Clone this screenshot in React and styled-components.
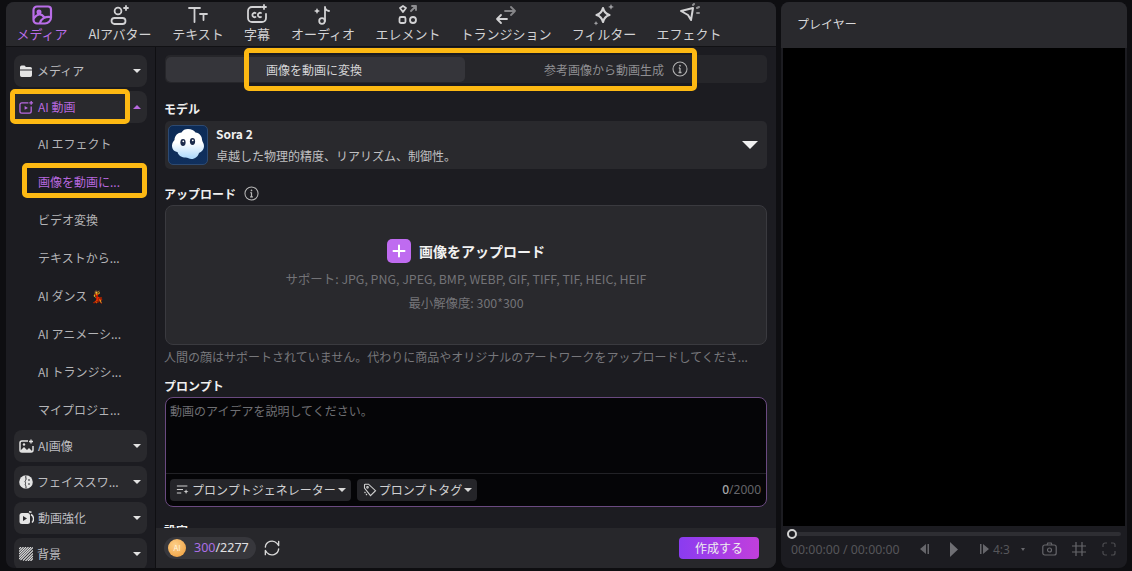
import React from "react";
import styled, { createGlobalStyle } from "styled-components";

const GlobalStyle = createGlobalStyle`
  html, body {
    margin: 0;
    padding: 0;
    background: #0e0e11;
    overflow: hidden;
  }
  * {
    box-sizing: border-box;
  }
`;

const FONT = `"Noto Sans CJK JP", "Noto Sans", sans-serif`;

const Stroke = ({ size = 20, children, color = "currentColor", sw = 1.8 }) => (
  <svg width={size} height={size} viewBox="0 0 24 24" fill="none" stroke={color} strokeWidth={sw} strokeLinecap="round" strokeLinejoin="round">
    {children}
  </svg>
);

const tabs = [
  {
    label: "メディア",
    w: 72,
    active: true,
    icon: (
      <Stroke size={24} sw={2.2}>
        <path d="M7 3.5h11a3 3 0 0 1 3 3v8c0 3.5-3 6-6 6H7a3.5 3.5 0 0 1-3.5-3.5V7A3.5 3.5 0 0 1 7 3.5z" />
        <path d="M4 15c3-4 7-5 10-1M10 20c1-4 5-7 11-6" />
        <circle cx="9" cy="9" r="1.4" />
      </Stroke>
    ),
  },
  {
    label: "AIアバター",
    w: 84,
    icon: (
      <Stroke size={24}>
        <circle cx="10" cy="8" r="3.4" />
        <rect x="3.5" y="15" width="14" height="6" rx="3" />
        <path d="M18 3v4M16 5h4" />
      </Stroke>
    ),
  },
  {
    label: "テキスト",
    w: 72,
    icon: (
      <Stroke size={24}>
        <path d="M3 5h11M8.5 5v14M14 11h7M17.5 11v6" />
      </Stroke>
    ),
  },
  {
    label: "字幕",
    w: 46,
    icon: (
      <Stroke size={24}>
        <path d="M16 4H7a4 4 0 0 0-4 4v7a4 4 0 0 0 4 4h10a4 4 0 0 0 4-4v-4" />
        <path d="M10.5 10a2.2 2.2 0 1 0 0 4M16 10a2.2 2.2 0 1 0 0 4M19 2v4M17 4h4" />
      </Stroke>
    ),
  },
  {
    label: "オーディオ",
    w: 86,
    icon: (
      <Stroke size={24}>
        <circle cx="11" cy="18" r="2.8" />
        <path d="M14 18V4c0 2 1.500 3.500 4 4" />
        <path d="M6 5l1 2 2 1-2 1-1 2-1-2-2-1 2-1z" fill="currentColor" stroke="none" />
      </Stroke>
    ),
  },
  {
    label: "エレメント",
    w: 84,
    icon: (
      <Stroke size={24}>
        <path d="M4 5l3-2 3 2-3 4z" />
        <path d="M15 8l5-5M16 3h4v4" opacity="0.6" />
        <rect x="3.500" y="14" width="6" height="6" rx="1.500" />
        <circle cx="17" cy="17" r="3" />
      </Stroke>
    ),
  },
  {
    label: "トランジション",
    w: 112,
    icon: (
      <Stroke size={24}>
        <path d="M3 16h10M7 12l-4 4 4 4" />
        <path d="M21 8H11M17 4l4 4-4 4" opacity="0.55" />
      </Stroke>
    ),
  },
  {
    label: "フィルター",
    w: 84,
    icon: (
      <Stroke size={24} sw={2.2}>
        <path d="M11 5c1 4 3 6 6.500 7-3.500 1-5.500 3-6.500 7-1-4-3-6-6.500-7 3.500-1 5.500-3 6.500-7z" />
        <path d="M19 1l.9 2 2 .9-2 .9-.9 2-.9-2-2-.9 2-.9zM4 18l.7 1.500 1.500.7-1.500.7L4 22.500l-.7-1.600-1.500-.7 1.500-.7z" fill="currentColor" stroke="none" opacity="0.7" />
      </Stroke>
    ),
  },
  {
    label: "エフェクト",
    w: 86,
    icon: (
      <Stroke size={24} sw={2}>
        <path d="M4 8l12-3-2 12-3-5z" />
        <path d="M16 2l1-1M20 5l2-1M20 10h2" opacity="0.6" />
      </Stroke>
    ),
  },
];

const Folder = () => (
  <svg width="14" height="14" viewBox="0 0 14 14">
    <path d="M1 3.200A1.700 1.700 0 0 1 2.700 1.500h2.800l1.500 1.500h4.300A1.700 1.700 0 0 1 13 4.700v6.600A1.700 1.700 0 0 1 11.300 13H2.700A1.700 1.700 0 0 1 1 11.300z" fill="#e4e4e4" />
    <rect x="1" y="5.500" width="12" height="1" fill="#2a2a2e" />
  </svg>
);

const VideoPlus = () => (
  <svg width="15" height="15" viewBox="0 0 16 16" fill="none" stroke="#b768df" strokeWidth="1.400">
    <path d="M10 3H3a2 2 0 0 0-2 2v7a2 2 0 0 0 2 2h8a2 2 0 0 0 2-2V7" />
    <path d="M6 6.500v4l3.500-2z" fill="#b768df" stroke="none" />
    <path d="M13 1v4M11 3h4" />
  </svg>
);

const ImageIcon = () => (
  <svg width="15" height="15" viewBox="0 0 15 15" fill="none">
    <path d="M9 2H3a2 2 0 0 0-2 2v7a2 2 0 0 0 2 2h9a2 2 0 0 0 2-2V7" stroke="#e0e0e0" strokeWidth="1.500" />
    <path d="M1 12l4-4 3 3 2-2 4 4H2z" fill="#e0e0e0" />
    <circle cx="5" cy="5.500" r="1.200" fill="#e0e0e0" />
    <path d="M12 .500v4M10 2.500h4" stroke="#e0e0e0" strokeWidth="1.300" />
  </svg>
);

const FaceIcon = () => (
  <svg width="14" height="14" viewBox="0 0 14 14">
    <circle cx="7" cy="7" r="6.800" fill="#e4e4e4" />
    <path d="M7 .500c-1 2 1 3-.5 5s1 2 0 3 1 2 .5 5" stroke="#2a2a2e" strokeWidth="1" fill="none" />
    <path d="M9 5h2M9 9h2" stroke="#2a2a2e" strokeWidth="1.200" />
  </svg>
);

const EnhanceIcon = () => (
  <svg width="15" height="14" viewBox="0 0 15 14">
    <rect x=".5" y="2" width="10.500" height="11" rx="2.500" fill="#e4e4e4" />
    <path d="M4 5v5l4-2.500z" fill="#2a2a2e" />
    <path d="M12 3.500a5 5 0 0 1 1 8M10 .800l2.500.5" stroke="#e4e4e4" strokeWidth="1.500" fill="none" />
  </svg>
);

const StripeIcon = () => (
  <svg width="14" height="14" viewBox="0 0 14 14" stroke="#dcdcdc" strokeWidth="1.100">
    <path d="M0 2l2-2M0 4.500L4.500 0M0 7l7-7M0 9.500L9.500 0M0 12L12 0M1.500 13L14 .5M4 13.500l10-10M6.500 14L14 6.500M9 14l5-5M11.500 14l2.500-2.500" />
  </svg>
);

const groupsBottom = [
  { label: "AI画像", icon: <ImageIcon /> },
  { label: "フェイススワ...", icon: <FaceIcon /> },
  { label: "動画強化", icon: <EnhanceIcon /> },
  { label: "背景", icon: <StripeIcon /> },
];

const subItems = [
  { label: "AI エフェクト" },
  { label: "画像を動画に...", active: true },
  { label: "ビデオ変換" },
  { label: "テキストから..." },
  { label: "AI ダンス 💃" },
  { label: "AI アニメーシ..." },
  { label: "AI トランジシ..." },
  { label: "マイプロジェ..." },
];

const InfoIcon = ({ size = 16, color = "#b0b0b0" }) => (
  <svg width={size} height={size} viewBox="0 0 16 16" fill="none" stroke={color} strokeWidth="1.100">
    <circle cx="8" cy="8" r="7" />
    <path d="M8 7v4.500M6.500 11.500h3M6.800 7H8" strokeWidth="1.300" />
    <circle cx="8" cy="4.700" r=".9" fill={color} stroke="none" />
  </svg>
);

const App = () => {
  return (
    <>
      <GlobalStyle />
      <Page>
        <Editor>
          <TopBar>
            {tabs.map(t => (
              <TopTab key={t.label} $w={t.w} $active={t.active}>
                <TabIcon>{t.icon}</TabIcon>
                <span>{t.label}</span>
              </TopTab>
            ))}
          </TopBar>
          <Body>
            <Sidebar>
              <Group>
                <Folder />
                <GroupLabel>メディア</GroupLabel>
                <Caret />
              </Group>
              <Group $open>
                <VideoPlus />
                <GroupLabel $active>AI 動画</GroupLabel>
                <Caret $up />
                <HighlightFrame $l={-4} $t={-2} $w={120} $h={35} />
              </Group>
              <SubList>
                {subItems.map(s => (
                  <SubItem key={s.label} $active={s.active}>
                    {s.label}
                    {s.active && <HighlightFrame $l={8} $t={1} $w={125} $h={35} />}
                  </SubItem>
                ))}
              </SubList>
              {groupsBottom.map(g => (
                <Group key={g.label}>
                  {g.icon}
                  <GroupLabel>{g.label}</GroupLabel>
                  <Caret />
                </Group>
              ))}
            </Sidebar>
            <Main>
              <Scroll>
                <ModeTabs>
                  <ModeActive>画像を動画に変換</ModeActive>
                  <ModeOther>
                    参考画像から動画生成
                    <InfoIcon />
                  </ModeOther>
                  <HighlightFrame $l={79} $t={-7} $w={453} $h={43} />
                </ModeTabs>
                <SectionTitle $mt={17}>モデル</SectionTitle>
                <ModelCard>
                  <ModelThumb>
                    <svg width="36" height="36" viewBox="0 0 36 36">
                      <path d="M18 2c3.500 0 6 1.500 7.500 3.500 4 .5 6.500 3.500 6.500 7 0 2 2 3.500 2 6.500 0 3.500-2.500 6-5 7-1 3.500-4 6-7.500 6-2.500 0-3.500-1.500-6-1.500-3.500 0-7-1.500-8-5.500C4 24.500 2 22 2 18.500 2 16 3.500 14 4.500 13c0-4.500 3.500-7.500 7-7.500C13 3 15 2 18 2z" fill="url(#sora)" />
                      <ellipse cx="13" cy="15.500" rx="2.600" ry="3.400" fill="#1c2a4a" />
                      <ellipse cx="22.500" cy="14.500" rx="2.600" ry="3.400" fill="#1c2a4a" />
                      <circle cx="13.300" cy="14.300" r=".9" fill="#fff" />
                      <circle cx="22.800" cy="13.300" r=".9" fill="#fff" />
                      <defs>
                        <linearGradient id="sora" x1="0" y1="0" x2="0" y2="1">
                          <stop offset="0.450" stopColor="#ffffff" />
                          <stop offset="1" stopColor="#a9d6fb" />
                        </linearGradient>
                      </defs>
                    </svg>
                  </ModelThumb>
                  <ModelText>
                    <ModelName>Sora 2</ModelName>
                    <ModelDesc>卓越した物理的精度、リアリズム、制御性。</ModelDesc>
                  </ModelText>
                  <BigCaret />
                </ModelCard>
                <SectionTitle $mt={16}>
                  アップロード
                  <InfoIcon size={15} color="#b8b8b8" />
                </SectionTitle>
                <UploadBox>
                  <UploadRow>
                    <PlusBadge>
                      <svg width="14" height="14" viewBox="0 0 14 14" stroke="#fff" strokeWidth="2" strokeLinecap="round">
                        <path d="M7 1.500v11M1.500 7h11" />
                      </svg>
                    </PlusBadge>
                    <UploadTitle>画像をアップロード</UploadTitle>
                  </UploadRow>
                  <UploadHint>サポート: JPG, PNG, JPEG, BMP, WEBP, GIF, TIFF, TIF, HEIC, HEIF</UploadHint>
                  <UploadHint>最小解像度: 300*300</UploadHint>
                </UploadBox>
                <Note>人間の顔はサポートされていません。代わりに商品やオリジナルのアートワークをアップロードしてくださ...</Note>
                <SectionTitle $mt={11}>プロンプト</SectionTitle>
                <PromptBox>
                  <PromptInput>動画のアイデアを説明してください。</PromptInput>
                  <PromptTools>
                    <ToolButton>
                      <svg width="14" height="14" viewBox="0 0 16 14" fill="none" stroke="#d0d0d0" strokeWidth="1.200">
                        <path d="M1 2.500h12M1 6.500h7M1 10.500h5" />
                        <path d="M11.500 6l.8 2 2 .8-2 .8-.8 2-.8-2-2-.8 2-.8z" fill="#d0d0d0" stroke="none" />
                      </svg>
                      プロンプトジェネレーター
                      <SmallCaret />
                    </ToolButton>
                    <ToolButton>
                      <svg width="14" height="14" viewBox="0 0 14 14" fill="none" stroke="#d0d0d0" strokeWidth="1.100">
                        <path d="M1.500 5V2a.8.8 0 0 1 .8-.8h3.200l7 6.500-5 5z" />
                        <circle cx="4.500" cy="4.300" r=".8" />
                        <path d="M1.500 9l1 1M3 11l1 1" />
                      </svg>
                      プロンプトタグ
                      <SmallCaret />
                    </ToolButton>
                    <Counter>
                      <b>0</b>/2000
                    </Counter>
                  </PromptTools>
                </PromptBox>
                <SectionTitle $mt={15}>設定</SectionTitle>
              </Scroll>
              <Footer>
                <Credits>
                  <Coin>AI</Coin>
                  <CreditText>
                    <em>300</em>/2277
                  </CreditText>
                </Credits>
                <Stroke size={20} color="#d8d8d8" sw={1.600}>
                  <path d="M4 11a8 8 0 0 1 14-4.500L20 9V4M20 13a8 8 0 0 1-14 4.500L4 15v5" />
                </Stroke>
                <CreateButton>作成する</CreateButton>
              </Footer>
            </Main>
          </Body>
        </Editor>
        <Player>
          <PlayerHead>プレイヤー</PlayerHead>
          <Screen />
          <Seek>
            <SeekKnob />
          </Seek>
          <Controls>
            <TimeText>00:00:00 / 00:00:00</TimeText>
            <ControlSlot $ml={20}>
              <svg width="9" height="10" viewBox="0 0 9 10" fill="#66666b">
                <path d="M6 0v10L0 5zM7.500 0H9v10H7.500z" />
              </svg>
            </ControlSlot>
            <ControlSlot $ml={21}>
              <svg width="8" height="15" viewBox="0 0 8 15" fill="#6f6f74">
                <path d="M0 0l8 7.500L0 15z" />
              </svg>
            </ControlSlot>
            <ControlSlot $ml={22}>
              <svg width="9" height="10" viewBox="0 0 9 10" fill="#66666b">
                <path d="M3 0v10l6-5zM0 0h1.500v10H0z" />
              </svg>
            </ControlSlot>
            <Ratio>4:3</Ratio>
            <TinyCaret />
            <ControlSlot $ml={17}>
              <svg width="15" height="14" viewBox="0 0 15 14" fill="none" stroke="#66666b" strokeWidth="1.200">
                <rect x=".8" y="3" width="13.400" height="10" rx="2" />
                <circle cx="7.500" cy="8" r="2" />
                <path d="M5 3l.8-2h3.400L10 3" />
              </svg>
            </ControlSlot>
            <ControlSlot $ml={15}>
              <svg width="14" height="14" viewBox="0 0 14 14" fill="none" stroke="#66666b" strokeWidth="1.200">
                <path d="M4 0v14M10 0v14M0 4h14M0 10h14" />
              </svg>
            </ControlSlot>
            <ControlSlot $ml={16}>
              <svg width="14" height="14" viewBox="0 0 14 14" fill="none" stroke="#4c4c50" strokeWidth="1.200">
                <path d="M1 5V3a2 2 0 0 1 2-2h2M9 1h2a2 2 0 0 1 2 2v2M13 9v2a2 2 0 0 1-2 2H9M5 13H3a2 2 0 0 1-2-2V9" />
              </svg>
            </ControlSlot>
          </Controls>
        </Player>
      </Page>
    </>
  );
};

const Page = styled.div`
  width: 1132px;
  height: 571px;
  padding: 2px 5px 3px 6px;
  display: flex;
  gap: 5px;
  background: #0e0e11;
  font-family: ${FONT};
  overflow: hidden;
`;
const Editor = styled.div`
  width: 770px;
  display: flex;
  flex-direction: column;
  border-radius: 8px;
  background: #1c1c21;
  overflow: hidden;
`;
const TopBar = styled.div`
  height: 45px;
  flex: none;
  padding-top: 1px;
  display: flex;
  background: #29292d;
  border-bottom: 1px solid #111114;
`;
const TopTab = styled.div`
  width: ${p => p.$w}px;
  display: flex;
  flex-direction: column;
  align-items: center;
  font-size: 13px;
  line-height: 15px;
  white-space: nowrap;
  color: ${p => (p.$active ? "#b96ee8" : "#d2d2d4")};
`;
const TabIcon = styled.div`
  height: 23px;
  display: flex;
  align-items: center;
  justify-content: center;
`;
const Body = styled.div`
  flex: 1;
  min-height: 0;
  display: flex;
`;
const Sidebar = styled.div`
  width: 150px;
  flex: none;
  padding: 8px 8px 0;
  display: flex;
  flex-direction: column;
  gap: 4px;
  border-right: 1px solid #0f0f12;
  overflow: hidden;
`;
const Group = styled.div`
  position: relative;
  height: 32px;
  flex: none;
  width: 133px;
  display: flex;
  align-items: center;
  gap: 4px;
  padding: 0 6px 0 5px;
  border-radius: 8px;
  background: #29292d;
`;
const GroupLabel = styled.span`
  flex: 1;
  margin-top: -2px;
  font-size: 12px;
  white-space: nowrap;
  color: ${p => (p.$active ? "#b768df" : "#bdbdc0")};
`;
const Caret = styled.i`
  width: 0;
  height: 0;
  border-left: 4px solid transparent;
  border-right: 4px solid transparent;
  ${p => (p.$up ? "border-bottom: 4px solid #b768df;" : "border-top: 4px solid #e2e2e2;")}
`;
const SubList = styled.div`
  display: flex;
  flex-direction: column;
  flex: none;
  margin-top: -3px;
  margin-bottom: -2px;
`;
const SubItem = styled.div`
  position: relative;
  height: 38px;
  padding-left: 24px;
  display: flex;
  align-items: center;
  font-size: 12px;
  white-space: nowrap;
  color: ${p => (p.$active ? "#b768df" : "#b4b4b7")};
`;
const HighlightFrame = styled.div`
  position: absolute;
  left: ${p => p.$l}px;
  top: ${p => p.$t}px;
  width: ${p => p.$w}px;
  height: ${p => p.$h}px;
  border: 5px solid #fdb913;
  border-radius: 5px;
  pointer-events: none;
`;
const Main = styled.div`
  flex: 1;
  min-width: 0;
  display: flex;
  flex-direction: column;
`;
const Scroll = styled.div`
  flex: 1;
  min-height: 0;
  padding: 8px 9px 0 9px;
  overflow: hidden;
`;
const ModeTabs = styled.div`
  position: relative;
  height: 28px;
  padding-left: 1px;
  display: flex;
  align-items: center;
  border-radius: 5px;
  background: #26262a;
`;
const ModeActive = styled.div`
  width: 299px;
  height: 25px;
  padding-left: 100px;
  display: flex;
  align-items: center;
  border-radius: 5px;
  background: #35353a;
  font-size: 12px;
  color: #d4d4d6;
`;
const ModeOther = styled.div`
  width: 223px;
  display: flex;
  align-items: center;
  justify-content: flex-end;
  gap: 8px;
  font-size: 12px;
  color: #8f8f92;
`;
const SectionTitle = styled.div`
  margin: ${p => p.$mt}px 0 0 -1px;
  height: 16px;
  display: flex;
  align-items: center;
  gap: 8px;
  font-size: 12px;
  font-weight: 700;
  color: #f0f0f0;
`;
const ModelCard = styled.div`
  margin-top: 5px;
  height: 48px;
  padding: 0 9px 0 3px;
  display: flex;
  align-items: center;
  gap: 8px;
  border-radius: 5px;
  background: #29292d;
`;
const ModelThumb = styled.div`
  width: 40px;
  height: 40px;
  display: flex;
  align-items: center;
  justify-content: center;
  border-radius: 5px;
  border: 1px solid #2d4a72;
  background: linear-gradient(160deg, #0c2a55, #10305e);
`;
const ModelText = styled.div`
  flex: 1;
  display: flex;
  flex-direction: column;
  gap: 5px;
`;
const ModelName = styled.div`
  font-size: 12px;
  line-height: 16px;
  font-weight: 700;
  color: #f0f0f0;
`;
const ModelDesc = styled.div`
  font-size: 12px;
  line-height: 17px;
  color: #c0c0c2;
`;
const BigCaret = styled.i`
  width: 0;
  height: 0;
  border-left: 8px solid transparent;
  border-right: 8px solid transparent;
  border-top: 8px solid #f0f0f0;
`;
const UploadBox = styled.div`
  margin-top: 4px;
  height: 140px;
  padding-top: 33px;
  display: flex;
  flex-direction: column;
  align-items: center;
  border-radius: 8px;
  border: 1px solid #3a3a3f;
  background: #29292d;
`;
const UploadRow = styled.div`
  display: flex;
  align-items: center;
  gap: 8px;
  margin-bottom: 4px;
`;
const PlusBadge = styled.div`
  width: 24px;
  height: 24px;
  display: flex;
  align-items: center;
  justify-content: center;
  border-radius: 5px;
  background: #bf6bf0;
`;
const UploadTitle = styled.div`
  font-size: 14px;
  font-weight: 700;
  color: #f2f2f2;
`;
const UploadHint = styled.div`
  height: 24px;
  line-height: 24px;
  font-size: 12.4px;
  color: #737377;
`;
const Note = styled.div`
  margin: 3px 0 0 -1px;
  height: 18px;
  line-height: 18px;
  font-size: 12px;
  white-space: nowrap;
  color: #77777b;
`;
const PromptBox = styled.div`
  margin-top: 4px;
  height: 110px;
  display: flex;
  flex-direction: column;
  border-radius: 8px;
  border: 1px solid #6a4a80;
  background: #050507;
`;
const PromptInput = styled.div`
  flex: 1;
  padding: 4px;
  line-height: 18px;
  font-size: 12px;
  color: #6f6f73;
`;
const PromptTools = styled.div`
  height: 33px;
  padding: 5px 5px 6px 4px;
  display: flex;
  align-items: center;
  gap: 6px;
  border-top: 1px solid #222226;
`;
const ToolButton = styled.div`
  height: 22px;
  padding: 0 5px 0 6px;
  display: flex;
  align-items: center;
  gap: 2px;
  border-radius: 4px;
  background: #252529;
  font-size: 12px;
  white-space: nowrap;
  color: #d0d0d2;
`;
const SmallCaret = styled.i`
  width: 0;
  height: 0;
  border-left: 4px solid transparent;
  border-right: 4px solid transparent;
  border-top: 4px solid #d8d8d8;
`;
const Counter = styled.div`
  margin-left: auto;
  font-family: "Noto Sans", sans-serif;
  font-size: 12px;
  color: #66666a;
  b {
    font-weight: 500;
    color: #a8a8aa;
  }
`;
const Footer = styled.div`
  height: 40px;
  flex: none;
  padding: 0 17px 1px 8px;
  display: flex;
  align-items: center;
  gap: 6px;
  background: #27272b;
`;
const Credits = styled.div`
  width: 92px;
  height: 22px;
  padding: 0 4px;
  display: flex;
  align-items: center;
  gap: 8px;
  border-radius: 11px;
  background: #37373c;
`;
const Coin = styled.div`
  width: 18px;
  height: 18px;
  display: flex;
  align-items: center;
  justify-content: center;
  border-radius: 50%;
  background: radial-gradient(circle at 40% 35%, #fdd08a, #ee9a36);
  font-size: 8px;
  color: #fff3df;
`;
const CreditText = styled.div`
  font-family: "Noto Sans", sans-serif;
  font-size: 12.5px;
  color: #e0e0e2;
  em {
    font-style: normal;
    color: #ac6fe6;
  }
`;
const CreateButton = styled.div`
  margin-left: auto;
  width: 80px;
  height: 22px;
  display: flex;
  align-items: center;
  justify-content: center;
  border-radius: 4px;
  background: linear-gradient(90deg, #8a3cf0, #c23fdc);
  font-size: 12px;
  color: #eee;
`;
const Player = styled.div`
  width: 346px;
  display: flex;
  flex-direction: column;
  border-radius: 8px;
  background: #1c1c21;
  overflow: hidden;
`;
const PlayerHead = styled.div`
  height: 46px;
  flex: none;
  padding: 0 0 3px 16px;
  display: flex;
  align-items: center;
  background: #29292d;
  font-size: 12px;
  color: #d8d8da;
`;
const Screen = styled.div`
  height: 478px;
  margin: 0 2px;
  flex: none;
  background: #000;
`;
const Seek = styled.div`
  position: relative;
  height: 4px;
  margin: 6px 6px 0 9px;
  flex: none;
  border-radius: 2px;
  background: #2e2e33;
`;
const SeekKnob = styled.div`
  position: absolute;
  left: -3px;
  top: -3px;
  width: 10px;
  height: 10px;
  border-radius: 50%;
  border: 2px solid #d2d2d2;
  background: #1c1c21;
`;
const Controls = styled.div`
  flex: 1;
  padding: 0 0 6px 10px;
  display: flex;
  align-items: center;
`;
const ControlSlot = styled.div`
  display: flex;
  align-items: center;
  margin-left: ${p => p.$ml}px;
`;
const TimeText = styled.div`
  width: 109px;
  font-family: "Noto Sans", sans-serif;
  font-size: 12.3px;
  white-space: nowrap;
  color: #56565a;
`;
const Ratio = styled.span`
  margin-left: 4px;
  width: 16px;
  font-family: "Noto Sans", sans-serif;
  font-size: 12px;
  color: #56565a;
`;
const TinyCaret = styled.i`
  width: 0;
  height: 0;
  margin-left: 12px;
  border-left: 2.500px solid transparent;
  border-right: 2.500px solid transparent;
  border-top: 3px solid #66666b;
`;

export default App;
